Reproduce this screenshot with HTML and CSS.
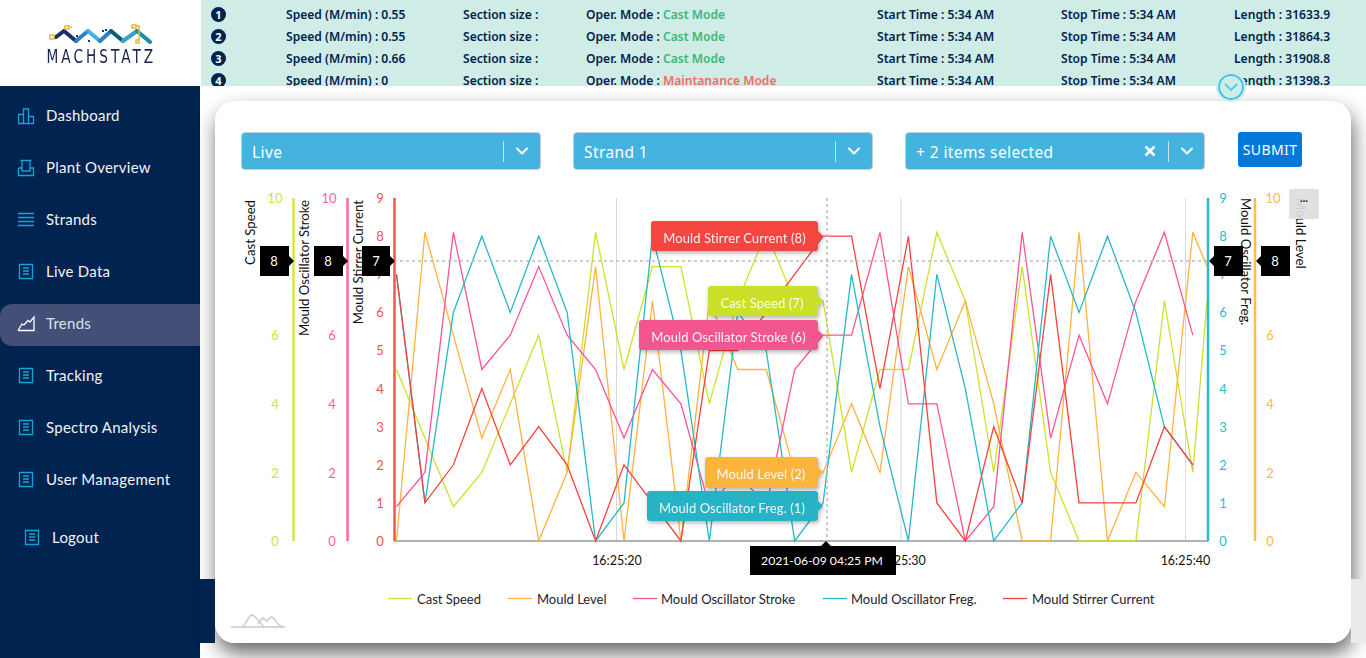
FILE: index.html
```html
<!DOCTYPE html>
<html lang="en">
<head>
<meta charset="utf-8">
<title>Machstatz Trends</title>
<link rel="stylesheet" href="styles.css">
</head>
<body>
<div class="app">
  <aside class="sidebar">
    <div class="logo">
      <svg class="logo-mark" width="104" height="30" viewBox="48 22 104 30">
        <g fill="none" stroke-width="4" stroke-linecap="round">
          <path stroke="#1b2f6e" d="M56 37 L64 31 L76 41"/>
          <path stroke="#2c82c4" d="M76 41 L88 31"/>
          <path stroke="#3fb0e0" d="M88 31 L100 41"/>
          <path stroke="#2c82c4" d="M100 41 L111 31"/>
          <path stroke="#0f5a78" d="M111 31 L123 41"/>
          <path stroke="#3a9ed4" d="M123 41 L137 31"/>
          <path stroke="#1a8aa8" d="M137 31 L150 42"/>
        </g>
        <g fill="none" stroke="#e9b949" stroke-width="1.6">
          <rect x="50" y="35" width="4" height="4"/>
          <rect x="65" y="26" width="4" height="3"/>
          <rect x="132" y="25" width="4" height="3"/>
          <rect x="136" y="40" width="3" height="3"/>
          <path d="M69 27 H72 M136 26 H139 V40"/>
        </g>
        <g fill="#27336e">
          <rect x="102" y="30" width="2" height="2"/>
          <rect x="105" y="29" width="2" height="2"/>
          <rect x="88" y="40" width="2" height="2"/>
          <rect x="76" y="35" width="2" height="2"/>
        </g>
      </svg>
      <div class="logo-text">MACHSTATZ</div>
    </div>
    <nav class="nav">
      <a class="nav-item">
        <svg class="nav-icon" width="18" height="18" viewBox="0 0 18 18"><path d="M1.5 16.5V7.500H6.500V16.500M6.500 16.500V2H11.500V16.500M11.500 16.500V9.500H16.500V16.500H1.500Z"/></svg>
        <span>Dashboard</span>
      </a>
      <a class="nav-item">
        <svg class="nav-icon" width="18" height="18" viewBox="0 0 18 18"><path d="M1.500 9H5M13 9H16.500V16.500H1.500V9M3.500 1.500H14.500M5 2V12H13V2"/></svg>
        <span>Plant Overview</span>
      </a>
      <a class="nav-item">
        <svg class="nav-icon" width="18" height="18" viewBox="0 0 18 18"><path d="M1 2.500H17M1 6.500H17M1 10.500H17M1 14.500H17"/></svg>
        <span>Strands</span>
      </a>
      <a class="nav-item">
        <svg class="nav-icon" width="18" height="18" viewBox="0 0 18 18"><path d="M2.500 1.500H15.500V15.500H2.500ZM6 5H12M6 8H12M6 11H12"/></svg>
        <span>Live Data</span>
      </a>
      <a class="nav-item nav-item-active">
        <svg class="nav-icon nav-icon-white" width="18" height="18" viewBox="0 0 18 18"><path d="M1 15.500H17V2L13 7L11 5.500L7 10L5 9L1 15.500"/></svg>
        <span>Trends</span>
      </a>
      <a class="nav-item">
        <svg class="nav-icon" width="18" height="18" viewBox="0 0 18 18"><path d="M2.500 1.500H15.500V15.500H2.500ZM6 5H12M6 8H12M6 11H12"/></svg>
        <span>Tracking</span>
      </a>
      <a class="nav-item">
        <svg class="nav-icon" width="18" height="18" viewBox="0 0 18 18"><path d="M2.500 1.500H15.500V15.500H2.500ZM6 5H12M6 8H12M6 11H12"/></svg>
        <span>Spectro Analysis</span>
      </a>
      <a class="nav-item">
        <svg class="nav-icon" width="18" height="18" viewBox="0 0 18 18"><path d="M2.500 1.500H15.500V15.500H2.500ZM6 5H12M6 8H12M6 11H12"/></svg>
        <span>User Management</span>
      </a>
      <a class="nav-item nav-item-logout">
        <svg class="nav-icon" width="18" height="18" viewBox="0 0 18 18"><path d="M2.500 1.500H15.500V15.500H2.500ZM6 5H12M6 8H12M6 11H12"/></svg>
        <span>Logout</span>
      </a>
    </nav>
  </aside>

  <main class="main">
    <header class="status">
      <div class="status-row">
        <span class="num">1</span><span>Speed (M/min) : 0.55</span><span>Section size :</span>
        <span>Oper. Mode : <b class="mode-ok">Cast Mode</b></span>
        <span>Start Time : 5:34 AM</span><span>Stop Time : 5:34 AM</span><span>Length : 31633.9</span>
      </div>
      <div class="status-row">
        <span class="num">2</span><span>Speed (M/min) : 0.55</span><span>Section size :</span>
        <span>Oper. Mode : <b class="mode-ok">Cast Mode</b></span>
        <span>Start Time : 5:34 AM</span><span>Stop Time : 5:34 AM</span><span>Length : 31864.3</span>
      </div>
      <div class="status-row">
        <span class="num">3</span><span>Speed (M/min) : 0.66</span><span>Section size :</span>
        <span>Oper. Mode : <b class="mode-ok">Cast Mode</b></span>
        <span>Start Time : 5:34 AM</span><span>Stop Time : 5:34 AM</span><span>Length : 31908.8</span>
      </div>
      <div class="status-row">
        <span class="num">4</span><span>Speed (M/min) : 0</span><span>Section size :</span>
        <span>Oper. Mode : <b class="mode-bad">Maintanance Mode</b></span>
        <span>Start Time : 5:34 AM</span><span>Stop Time : 5:34 AM</span><span>Length : 31398.3</span>
      </div>
    </header>

    <button class="collapse" type="button" aria-label="Collapse">
      <svg width="14" height="8" viewBox="0 0 14 8"><path d="M1 1L7 7L13 1"/></svg>
    </button>

    <div class="strip strip-left"></div>
    <div class="strip strip-right"></div>

    <section class="card-wrap">
      <div class="card">
        <div class="filters">
          <div class="select">
            <span class="select-value">Live</span>
            <i class="select-sep"></i>
            <svg class="chev" width="12" height="8" viewBox="0 0 12 8"><path d="M1 1.500L6 6.500L11 1.500"/></svg>
          </div>
          <div class="select">
            <span class="select-value">Strand 1</span>
            <i class="select-sep"></i>
            <svg class="chev" width="12" height="8" viewBox="0 0 12 8"><path d="M1 1.500L6 6.500L11 1.500"/></svg>
          </div>
          <div class="select select-multi">
            <span class="select-value">+ 2 items selected</span>
            <svg class="clear" width="12" height="12" viewBox="0 0 12 12"><path d="M1.500 1.500L10.500 10.500M10.500 1.500L1.500 10.500"/></svg>
            <i class="select-sep select-sep-tight"></i>
            <svg class="chev" width="12" height="8" viewBox="0 0 12 8"><path d="M1 1.500L6 6.500L11 1.500"/></svg>
          </div>
          <button class="submit" type="button">SUBMIT</button>
        </div>

        <svg class="chart" width="1136" height="450" viewBox="215 188 1136 450">
          <!-- grid -->
          <path class="grid" d="M616.500 198V541M901 198V541M1185.500 198V541"/>
          <path class="baseline" d="M394 541H1208"/>

          <!-- axis titles -->
          <text class="axis-title" transform="translate(250 200) rotate(-90)" text-anchor="end">Cast Speed</text>
          <text class="axis-title" transform="translate(304 200) rotate(-90)" text-anchor="end">Mould Oscillator Stroke</text>
          <text class="axis-title" transform="translate(358 200) rotate(-90)" text-anchor="end">Mould Stirrer Current</text>
          <text class="axis-title" transform="translate(1246 198) rotate(90)">Mould Oscillator Freg.</text>
          <text class="axis-title" transform="translate(1301 198) rotate(90)">Mould Level</text>

          <!-- tick labels -->
          <g class="ticks tick-lime" text-anchor="middle">
            <text x="275" y="198">10</text><text x="275" y="335">6</text><text x="275" y="404">4</text><text x="275" y="473">2</text><text x="275" y="541">0</text>
          </g>
          <g class="ticks tick-pink" text-anchor="middle">
            <text x="329" y="198">10</text><text x="332" y="335">6</text><text x="332" y="404">4</text><text x="332" y="473">2</text><text x="332" y="541">0</text>
          </g>
          <g class="ticks tick-red" text-anchor="middle">
            <text x="380" y="198">9</text><text x="380" y="236">8</text><text x="380" y="274">7</text><text x="380" y="312">6</text><text x="380" y="350">5</text><text x="380" y="389">4</text><text x="380" y="427">3</text><text x="380" y="465">2</text><text x="380" y="503">1</text><text x="380" y="541">0</text>
          </g>
          <g class="ticks tick-teal" text-anchor="middle">
            <text x="1223" y="198">9</text><text x="1223" y="236">8</text><text x="1223" y="274">7</text><text x="1223" y="312">6</text><text x="1223" y="350">5</text><text x="1223" y="389">4</text><text x="1223" y="427">3</text><text x="1223" y="465">2</text><text x="1223" y="503">1</text><text x="1223" y="541">0</text>
          </g>
          <g class="ticks tick-orange" text-anchor="middle">
            <text x="1273" y="198">10</text><text x="1270" y="335">6</text><text x="1270" y="404">4</text><text x="1270" y="473">2</text><text x="1270" y="541">0</text>
          </g>

          <!-- series, plotted in data units -->
          <g class="series" transform="translate(396.500 541) scale(28.440 -34.300)">
            <polyline class="s-lime" points="0,5 1,3 2,1 3,2 4,4 5,6 6,2 7,9 8,5 9,8 10,8 11,4 12,7 13,9 14,7 15,7 16,2 17,5 18,5 19,9 20,7 21,2 22,8 23,2 24,0 25,0 26,0 27,7 28,2 28.500,7"/>
            <polyline class="s-orange" points="0,0 1,9 2,6 3,3 4,5 5,0 6,2 7,8 8,0 9,7 10,0 11,7 12,5 13,5 14,2 15,2 16,4 17,2 18,8 19,5 20,7 21,4 22,0 23,0 24,9 25,0 26,2 27,1 28,9 28.500,8"/>
            <polyline class="s-pink" points="0,1 1,2 2,9 3,5 4,6 5,8 6,6 7,5 8,3 9,5 10,4 11,1 12,2 13,1 14,5 15,6 16,6 17,9 18,4 19,4 20,0 21,1 22,9 23,3 24,6 25,4 26,7 27,9 28,6"/>
          </g>
          <g class="series" transform="translate(396.500 541) scale(28.440 -38.100)">
            <polyline class="s-teal" points="0,7 1,1 2,6 3,8 4,6 5,8 6,6 7,0 8,1 9,8 10,5 11,0 12,6 13,5 14,0 15,1 16,7 17,3 18,0 19,7 20,4 21,0 22,1 23,8 24,6 25,8 26,6 27,3 28,2"/>
            <polyline class="s-red" points="0,7 1,1 2,2 3,4 4,2 5,3 6,2 7,0 8,2 9,1 10,0 11,5 12,5 13,6 14,7 15,8 16,8 17,4 18,8 19,1 20,0 21,3 22,1 23,7 24,1 25,1 26,1 27,3 28,2"/>
          </g>

          <!-- value axes -->
          <path class="axis axis-lime" d="M293.500 198V541"/>
          <path class="axis axis-pink" d="M347.500 198V541"/>
          <path class="axis axis-red" d="M394.500 198V541"/>
          <path class="axis axis-teal" d="M1208 198V541"/>
          <path class="axis axis-orange" d="M1255 198V541"/>

          <!-- crosshair -->
          <path class="cross" d="M394 261H1208M827 198V541"/>

          <!-- x labels -->
          <g class="xticks" text-anchor="middle">
            <text x="617" y="560">16:25:20</text>
            <text x="901" y="560">16:25:30</text>
            <text x="1185.500" y="560">16:25:40</text>
          </g>

          <!-- series tooltips -->
          <g class="tip">
            <path class="tip-red" d="M654 221H815a3 3 0 0 1 3 3V231L823 236L818 241V248a3 3 0 0 1 -3 3H654a3 3 0 0 1 -3 -3V224a3 3 0 0 1 3 -3Z"/>
            <text x="734.500" y="238" text-anchor="middle">Mould Stirrer Current (8)</text>
          </g>
          <g class="tip">
            <path class="tip-lime" d="M711 286H815a3 3 0 0 1 3 3V296L823 301L818 306V313a3 3 0 0 1 -3 3H711a3 3 0 0 1 -3 -3V289a3 3 0 0 1 3 -3Z"/>
            <text x="762" y="303" text-anchor="middle">Cast Speed (7)</text>
          </g>
          <g class="tip">
            <path class="tip-pink" d="M642 320H815a3 3 0 0 1 3 3V330L823 335L818 340V347a3 3 0 0 1 -3 3H642a3 3 0 0 1 -3 -3V323a3 3 0 0 1 3 -3Z"/>
            <text x="728.500" y="337" text-anchor="middle">Mould Oscillator Stroke (6)</text>
          </g>
          <g class="tip">
            <path class="tip-orange" d="M708 457H815a3 3 0 0 1 3 3V467L823 472L818 477V485a3 3 0 0 1 -3 3H708a3 3 0 0 1 -3 -3V460a3 3 0 0 1 3 -3Z"/>
            <text x="761" y="474" text-anchor="middle">Mould Level (2)</text>
          </g>
          <g class="tip">
            <path class="tip-teal" d="M650 491H815a3 3 0 0 1 3 3V501L823 506L818 511V518a3 3 0 0 1 -3 3H650a3 3 0 0 1 -3 -3V494a3 3 0 0 1 3 -3Z"/>
            <text x="732" y="508" text-anchor="middle">Mould Oscillator Freg. (1)</text>
          </g>

          <!-- axis cursors -->
          <g class="cursor">
            <path d="M260 246H289V256L294 261L289 266V276H260Z"/><text x="274" y="261">8</text>
            <path d="M314 246H343V256L348 261L343 266V276H314Z"/><text x="328" y="261">8</text>
            <path d="M362 246H390V256L395 261L390 266V276H362Z"/><text x="376" y="261">7</text>
            <path d="M1243 246H1214V256L1209 261L1214 266V276H1243Z"/><text x="1228" y="261">7</text>
            <path d="M1290 246H1261V256L1256 261L1261 266V276H1290Z"/><text x="1275" y="261">8</text>
            <path d="M750 546H821L826 541L831 546H896V575H750Z"/><text class="cursor-date" x="822" y="560.500">2021-06-09 04:25 PM</text>
          </g>

          <!-- legend -->
          <g class="legend">
            <path class="s-lime" d="M388 598.500H412"/><text x="417" y="599">Cast Speed</text>
            <path class="s-orange" d="M508 598.500H532"/><text x="537" y="599">Mould Level</text>
            <path class="s-pink" d="M633 598.500H657"/><text x="661" y="599">Mould Oscillator Stroke</text>
            <path class="s-teal" d="M823 598.500H847"/><text x="851" y="599">Mould Oscillator Freg.</text>
            <path class="s-red" d="M1003 598.500H1027"/><text x="1032" y="599">Mould Stirrer Current</text>
          </g>

          <!-- chart logo -->
          <g class="chart-logo">
            <path class="chart-logo-base" d="M231 627H285"/>
            <path d="M241 627C246 627 248 615 252 615C256 615 259 624 265 627"/>
            <path d="M258 624C261 622 261 618 263 618L267 621L271 617C275 617 277 627 284 627"/>
          </g>
        </svg>
        <div class="chart-menu">...</div>
      </div>
    </section>
  </main>
</div>
</body>
</html>
```
FILE: styles.css
```css
* { box-sizing: border-box; }
html, body { margin: 0; height: 100%; }
body { width: 1366px; height: 658px; overflow: hidden; background: #fff; font-family: "Lato", sans-serif; }
.app { display: flex; height: 658px; }

/* sidebar */
.sidebar { width: 200px; flex: none; background: #00234f; display: flex; flex-direction: column; }
.logo { height: 86px; background: #fff; display: flex; flex-direction: column; align-items: center; padding-top: 22px; }
.logo-mark { display: block; }
.logo-text { margin-top: -5px; padding-left: 3px; font: 400 19px/19px "Liberation Sans Narrow", "DejaVu Sans Condensed", sans-serif; letter-spacing: 3.800px; color: #1c2450; transform: scaleX(.8); white-space: nowrap; }
.nav { display: flex; flex-direction: column; padding-top: 10px; }
.nav-item { height: 42px; margin-bottom: 10px; display: flex; align-items: center; gap: 11px; padding-left: 17px; border-radius: 12px 0 0 12px; color: #f0f3f8; font-size: 15px; letter-spacing: .25px; }
.nav-item span { margin-bottom: 4px; }
.nav-item-active { background: #434f76; color: #dfe2ea; }
.nav-item-logout { margin-top: 6px; padding-left: 23px; }
.nav-icon { fill: none; stroke: #12a4dc; stroke-width: 1.3; flex: none; margin-bottom: 3px; }
.nav-icon-white { stroke: #fff; }

/* main */
.main { flex: 1; position: relative; display: flex; flex-direction: column; min-width: 0; }
.status { height: 86px; margin-left: 1px; background: #cfece7; overflow: hidden; padding-top: 4px; color: #00234f; font: 600 12.100px/22px "Noto Sans", sans-serif; }
.status-row { display: grid; grid-template-columns: 75px 177px 123px 291px 184px 173px 1fr; padding-left: 10px; height: 22px; align-items: center; white-space: nowrap; }
.num { width: 15px; height: 15px; border-radius: 50%; background: #00234f; color: #fff; font: 700 11px/15px "Noto Sans", sans-serif; text-align: center; margin-top: -1px; }
.status b { font-weight: 600; }
.mode-ok { color: #3cb878; }
.mode-bad { color: #ee6f60; }

.collapse { position: absolute; z-index: 5; left: 1016px; top: 72px; width: 30px; height: 30px; padding: 0; border: 2px solid #cfece7; border-radius: 50%; background: #cfece7; box-shadow: inset 0 0 0 2px #38c6ef; display: flex; align-items: center; justify-content: center; }
.collapse svg { fill: none; stroke: #38c6ef; stroke-width: 1.6; }

.strip { position: absolute; z-index: 2; top: 579px; height: 64px; width: 15px; }
.strip-left { left: 0; background: #00234f; }
.strip-right { right: 0; background: #eaeaea; }

.card-wrap { margin: 15px 15px 0; height: 542px; }
.card-wrap::before { content: ""; position: absolute; z-index: 1; left: 15px; top: 101px; width: 1136px; height: 542px; border-radius: 20px; box-shadow: 2px 10px 20px rgba(0, 0, 0, .6); }
.card { position: relative; z-index: 3; height: 542px; background: #fff; border-radius: 20px; padding-top: 31px; }

.filters { display: flex; align-items: flex-start; gap: 32px; padding-left: 26px; height: 38px; margin-bottom: 18px; }
.select { width: 300px; height: 38px; background: #45b3e0; border: 1px solid #bfcfd8; border-radius: 4px; display: flex; align-items: center; padding: 0 12px 0 10px; color: #fff; font: 400 15.500px/1 "Noto Sans", sans-serif; letter-spacing: .4px; }
.select-multi { padding-right: 11px; }
.select-value { flex: 1; padding-top: 4px; }
.select-sep { width: 1px; height: 21px; background: #cfe3ee; margin-right: 12px; }
.select-sep-tight { margin-left: 12px; }
.chev { fill: none; stroke: #fff; stroke-width: 2; stroke-linecap: round; stroke-linejoin: round; }
.clear { fill: none; stroke: #fff; stroke-width: 2.600; }
.submit { margin-left: 1px; width: 64px; height: 35px; border: 0; padding: 0; border-radius: 3px; background: #0279d8; color: #fff; font: 400 14px/1 "Noto Sans", sans-serif; letter-spacing: .4px; }

.chart { display: block; }
.chart text { font-family: "Lato", sans-serif; dominant-baseline: central; }
.grid { stroke: #d9d9d9; stroke-width: 1; fill: none; }
.baseline { stroke: #666; stroke-width: 1; }
.axis-title { font-size: 13.200px; fill: #111; }
.ticks { font-size: 13px; }
.tick-lime { fill: #d0e23a; }
.tick-pink { fill: #ff5f9e; }
.tick-red { fill: #f4504c; }
.tick-teal { fill: #2bbccd; }
.tick-orange { fill: #ffb845; }
.series polyline { fill: none; stroke-width: 1.300; vector-effect: non-scaling-stroke; stroke-linejoin: miter; }
.s-lime { stroke: #cfe02c; }
.s-orange { stroke: #ffb23e; }
.s-pink { stroke: #ff5394; }
.s-teal { stroke: #27b8ca; }
.s-red { stroke: #f6423f; }
.axis { stroke-width: 2.500; fill: none; }
.axis-lime { stroke: #d8e548; }
.axis-pink { stroke: #ff6ba6; }
.axis-red { stroke: #f6544f; }
.axis-teal { stroke: #2abccd; }
.axis-orange { stroke: #ffbd50; }
.cross { stroke: #bdbdbd; stroke-width: 1.500; stroke-dasharray: 3 3; fill: none; }
.xticks { font-size: 12.500px; fill: #111; }
.tip path { filter: drop-shadow(1px 2px 2px rgba(0, 0, 0, .3)); }
.tip text { font-size: 13px; fill: #fff; letter-spacing: .1px; opacity: .92; }
.tip-red { fill: #f44540; }
.tip-lime { fill: #cbe028; }
.tip-pink { fill: #f2558f; }
.tip-orange { fill: #fbb53f; }
.tip-teal { fill: #26b3c5; }
.cursor path { fill: #000; }
.cursor text { font-size: 13px; fill: #fff; text-anchor: middle; }
.cursor .cursor-date { font-size: 12.200px; }
.legend path { fill: none; stroke-width: 1.300; }
.legend text { font-size: 13px; fill: #1c2230; }
.chart-logo path { fill: none; stroke: #d2d2d2; stroke-width: 1.800; }
.chart-logo .chart-logo-base { stroke: #c8c8c8; stroke-width: 1.600; }
.chart-menu { position: absolute; left: 1074px; top: 88px; width: 30px; height: 30px; border-radius: 2px; background: rgba(222, 222, 222, .93); color: #222; font: 700 11px/18px "Lato", sans-serif; text-align: center; }
```
